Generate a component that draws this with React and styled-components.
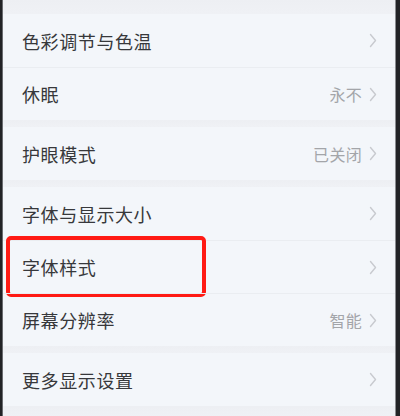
import React from "react";
import styled, { createGlobalStyle } from "styled-components";

const GlobalStyle = createGlobalStyle`
  html, body {
    margin: 0;
    padding: 0;
    background: #1c1c1e;
  }
  body {
    font-family: "Noto Sans CJK SC", "Noto Sans", sans-serif;
  }
`;

const Phone = styled.div`
  display: flex;
  width: 400px;
  height: 416px;
  overflow: hidden;
  background: #1c1c1e;
`;

const Bezel = styled.div`
  width: ${(p) => p.$width}px;
  flex-shrink: 0;
  background: #222326;
  box-shadow: ${(p) => (p.$right ? "inset 1px 0 0 #8a8c90" : "inset -1px 0 0 #6a6c70")};
`;

const Screen = styled.div`
  flex: 1;
  display: flex;
  flex-direction: column;
  background: #f3f6fa;
`;

const Band = styled.div`
  height: ${(p) => p.$height}px;
  flex-shrink: 0;
  background: linear-gradient(#edeff3, #eff1f5);
`;

const Group = styled.div`
  display: flex;
  flex-direction: column;
  background: #f3f6fa;
`;

const Row = styled.div`
  position: relative;
  height: 53px;
  display: flex;
  align-items: center;
  padding: 0 18px 0 19px;
  box-sizing: border-box;
  & + & {
    border-top: 1px solid #eaedf1;
  }
`;

const Title = styled.span`
  flex: 1;
  font-size: 18px;
  color: #37383b;
  letter-spacing: 0.6px;
`;

const Value = styled.span`
  font-size: 16px;
  color: #a3a5a9;
  margin-right: 7px;
  letter-spacing: 0.3px;
`;

const Chevron = styled.svg`
  width: 8px;
  height: 15px;
  flex-shrink: 0;
`;

const Highlight = styled.div`
  position: absolute;
  left: 3px;
  top: -5px;
  width: 200px;
  height: 61px;
  box-sizing: border-box;
  border: 4px solid #ff1a14;
  border-radius: 5px;
  pointer-events: none;
`;

const groups = [
  { band: 14, items: [{ title: "色彩调节与色温" }, { title: "休眠", value: "永不" }] },
  { band: 7, items: [{ title: "护眼模式", value: "已关闭" }] },
  {
    band: 7,
    items: [
      { title: "字体与显示大小" },
      { title: "字体样式", marked: true },
      { title: "屏幕分辨率", value: "智能" },
    ],
  },
  { band: 7, items: [{ title: "更多显示设置" }] },
];

const Arrow = () => (
  <Chevron viewBox="0 0 8 15">
    <path d="M1.5 1.5 L6.5 7.5 L1.5 13.5" fill="none" stroke="#c8cacf" strokeWidth="1.4" strokeLinecap="round" strokeLinejoin="round" />
  </Chevron>
);

const App = () => {
  return (
    <>
      <GlobalStyle />
      <Phone>
        <Bezel $width={3} />
        <Screen>
          {groups.map((group, i) => (
            <React.Fragment key={i}>
              <Band $height={group.band} />
              <Group>
                {group.items.map((item) => (
                  <Row key={item.title}>
                    <Title>{item.title}</Title>
                    {item.value && <Value>{item.value}</Value>}
                    <Arrow />
                    {item.marked && <Highlight />}
                  </Row>
                ))}
              </Group>
            </React.Fragment>
          ))}
          <Band $height={12} />
        </Screen>
        <Bezel $width={5} $right />
      </Phone>
    </>
  );
};

export default App;
